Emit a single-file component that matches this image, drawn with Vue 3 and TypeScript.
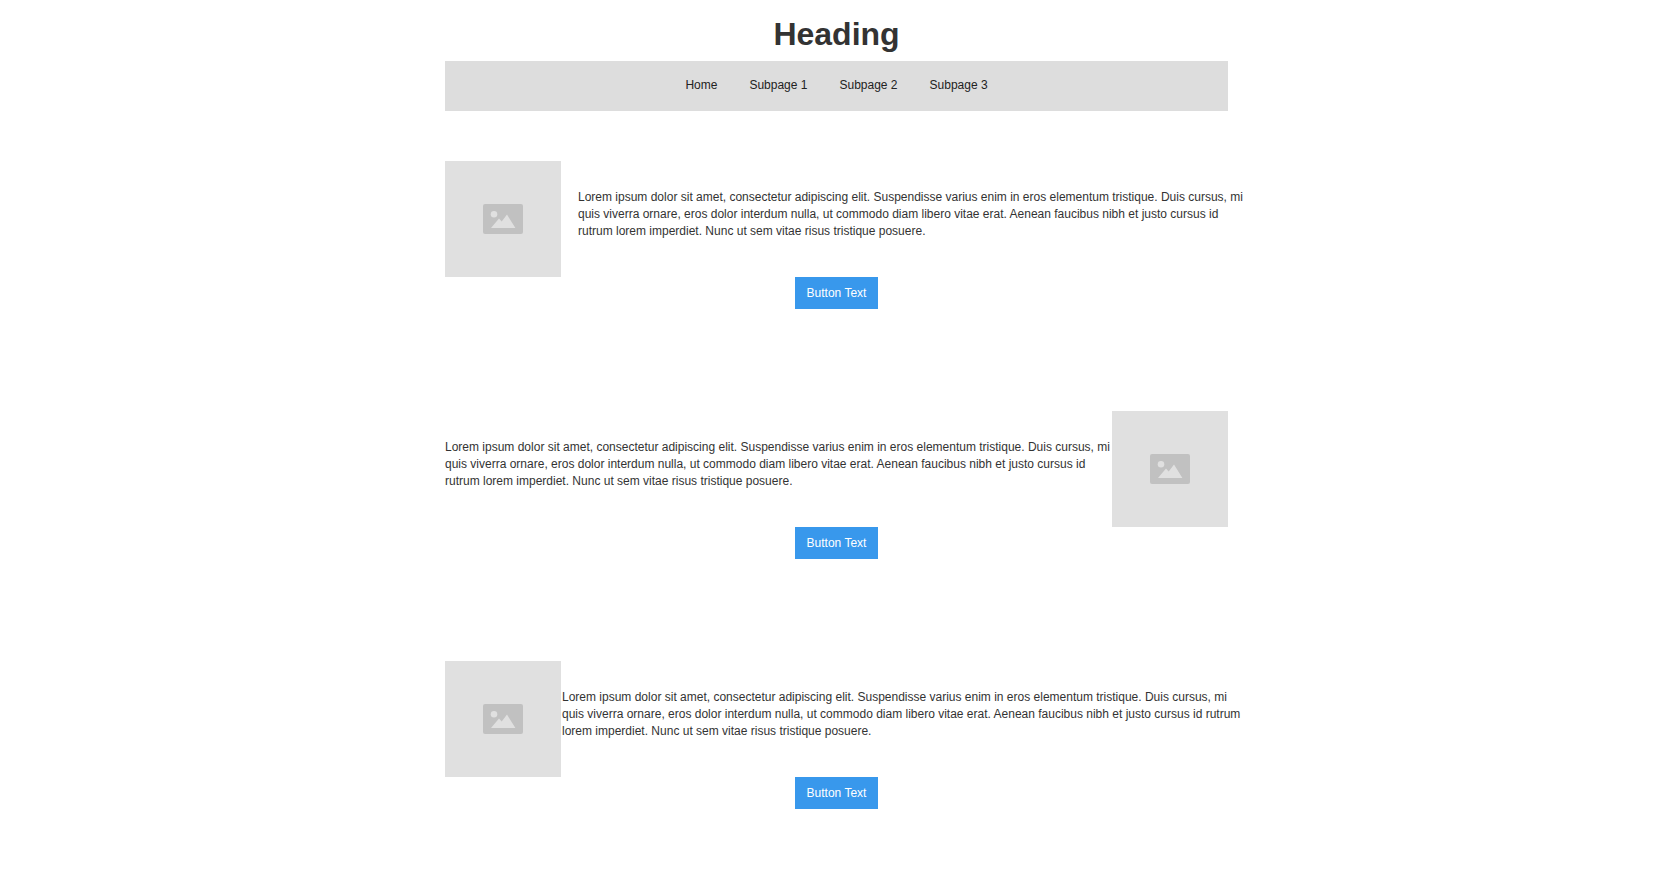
<script setup lang="ts">
interface Feature {
  id: number
  layout: 'spaced' | 'reversed' | 'tight'
}

const pages: string[] = ['Home', 'Subpage 1', 'Subpage 2', 'Subpage 3']

const features: Feature[] = [
  { id: 1, layout: 'spaced' },
  { id: 2, layout: 'reversed' },
  { id: 3, layout: 'tight' },
]

const copy =
  'Lorem ipsum dolor sit amet, consectetur adipiscing elit. Suspendisse varius enim in eros elementum tristique. Duis cursus, mi quis viverra ornare, eros dolor interdum nulla, ut commodo diam libero vitae erat. Aenean faucibus nibh et justo cursus id rutrum lorem imperdiet. Nunc ut sem vitae risus tristique posuere.'
</script>

<template>
  <div class="container">
    <h1 class="heading">Heading</h1>
    <nav class="nav" aria-label="Main">
      <a v-for="page in pages" :key="page" class="nav-link" href="#">{{ page }}</a>
    </nav>
    <main>
      <section v-for="feature in features" :key="feature.id" class="feature">
        <div class="row" :class="feature.layout">
          <svg class="picture" viewBox="0 0 116 116" role="img" aria-label="Image placeholder">
            <rect width="116" height="116" fill="#e0e0e0" />
            <rect x="38" y="43" width="40" height="30" rx="2" fill="#c1c1c1" />
            <circle cx="49" cy="53.3" r="3.3" fill="#e0e0e0" />
            <path d="M46 67 54 57.6 56.7 60.6 62 53.6 70.4 67Z" fill="#e0e0e0" />
          </svg>
          <p class="copy">{{ copy }}</p>
        </div>
        <button class="button" type="button">Button Text</button>
      </section>
    </main>
  </div>
</template>

<style>
body {
  margin: 0;
  background: #fff;
}
</style>

<style scoped>
.container {
  max-width: 783px;
  margin: 0 auto;
  color: #333;
  font-family: Arial, 'Liberation Sans', sans-serif;
  font-size: 12px;
  line-height: 17px;
}

.heading {
  margin: 0;
  padding: 16px 0 8px;
  font-size: 32px;
  line-height: 37px;
  font-weight: 700;
  text-align: center;
}

.nav {
  display: flex;
  flex-wrap: wrap;
  justify-content: center;
  min-height: 50px;
  background: #ddd;
}

.nav-link {
  padding: 16px;
  color: #222;
  text-decoration: none;
}

.feature {
  display: flex;
  flex-direction: column;
  align-items: center;
  box-sizing: border-box;
  min-height: 250px;
  padding: 50px 0;
}

.row {
  display: flex;
  width: 100%;
}

.spaced {
  gap: 17px;
}

.reversed {
  flex-direction: row-reverse;
}

.tight {
  gap: 1px;
}

.picture {
  flex: none;
  width: 116px;
  height: 116px;
}

.copy {
  flex: 1;
  margin: 0;
  padding-top: 28px;
}

/* Text beside a left-hand picture may run a little into the page margin. */
@media (min-width: 840px) {
  .spaced .copy,
  .tight .copy {
    margin-right: -16px;
  }
}

.button {
  padding: 8px 12px;
  border: 0;
  border-radius: 0;
  background: #3898ec;
  color: #fff;
  font: inherit;
  line-height: 16px;
  cursor: pointer;
}
</style>
